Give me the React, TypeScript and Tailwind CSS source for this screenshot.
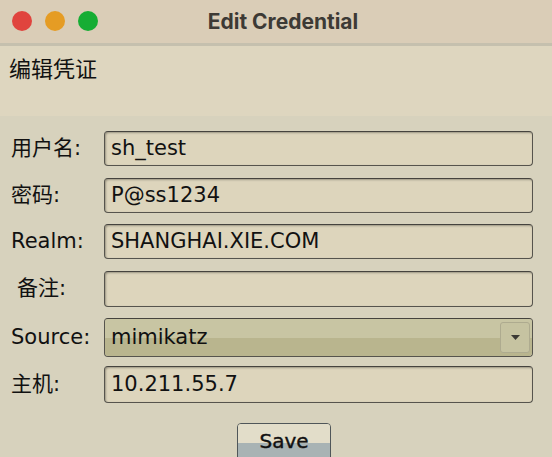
import React from "react";

const font = { fontFamily: '"DejaVu Sans", "Noto Sans CJK SC", sans-serif' };

function Field({ value }: { value: string }) {
  return (
    <div className="flex-1 h-full rounded-[4px] border border-[#56544d] border-t-[#45433e] bg-[#ddd5bc] shadow-[inset_1px_1px_2px_rgba(0,0,0,0.3)] flex items-center pl-[6px] text-[21px] text-[#111] leading-none">
      {value}
    </div>
  );
}

export default function App() {
  return (
    <div
      className="w-[552px] h-[457px] overflow-hidden bg-[#d7d2bd] flex flex-col text-[#111]"
      style={font}
    >
      {/* Title bar */}
      <div className="relative h-[43px] shrink-0 bg-[#dacdb7] flex items-center justify-center">
        <div className="absolute left-[12px] top-[11px] flex gap-[13px]">
          <div className="w-[20px] h-[20px] rounded-full bg-[#e0443e]" />
          <div className="w-[20px] h-[20px] rounded-full bg-[#e59c24]" />
          <div className="w-[20px] h-[20px] rounded-full bg-[#16ad34]" />
        </div>
        <span
          className="ml-[14px] text-[21px] font-bold text-[#3d3a35]"
          style={{ fontFamily: 'Inter, "Liberation Sans", sans-serif' }}
        >
          Edit Credential
        </span>
      </div>
      <div className="h-[3px] shrink-0 bg-[#c5c0ae]" />
      {/* Header */}
      <div className="h-[70px] shrink-0 bg-[#ded6bf] px-[9px] pt-[10px]">
        <div className="text-[22px] leading-[22px]" style={{ fontFamily: '"Noto Sans CJK SC", sans-serif' }}>
          编辑凭证
        </div>
      </div>
      {/* Form */}
      <div className="flex flex-col pt-[15px] pr-[19px]">
        <div className="flex items-center h-[35px]">
          <div className="w-[104px] pl-[11px] text-[21px]">用户名:</div>
          <Field value="sh_test" />
        </div>
        <div className="flex items-center h-[35px] mt-[12px]">
          <div className="w-[104px] pl-[11px] text-[21px]">密码:</div>
          <Field value="P@ss1234" />
        </div>
        <div className="flex items-center h-[35px] mt-[11px]">
          <div className="w-[104px] pl-[11px] text-[21px]">Realm:</div>
          <Field value="SHANGHAI.XIE.COM" />
        </div>
        <div className="flex items-center h-[36px] mt-[12px]">
          <div className="w-[104px] pl-[17px] text-[21px]">备注:</div>
          <Field value="" />
        </div>
        <div className="flex items-center h-[39px] mt-[11px]">
          <div className="w-[104px] pl-[11px] text-[21px]">Source:</div>
          <div className="flex-1 h-full rounded-[4px] border border-[#56544d] border-t-[#45433e] overflow-hidden relative flex flex-col shadow-[inset_1px_1px_2px_rgba(0,0,0,0.3)]">
            <div className="h-1/2 bg-[#c8c5a3]" />
            <div className="h-1/2 bg-[#b9b58e]" />
            <div className="absolute inset-0 flex items-center pl-[6px] text-[21px] leading-none">
              mimikatz
            </div>
            <div className="absolute right-[2px] top-[3px] bottom-[3px] w-[30px] rounded-[3px] border border-[#aeab8f] bg-[#c6c3a1] flex items-center justify-center">
              <svg width="9" height="5" viewBox="0 0 9 5">
                <path d="M0 0 L9 0 L4.5 5 Z" fill="#3b3a35" />
              </svg>
            </div>
          </div>
        </div>
        <div className="flex items-center h-[37px] mt-[9px]">
          <div className="w-[104px] pl-[11px] text-[21px]">主机:</div>
          <Field value="10.211.55.7" />
        </div>
        <div className="flex justify-center mt-[20px] pl-[35px]">
          <div className="w-[94px] h-[40px] rounded-[4px] border border-[#4f5659] overflow-hidden relative flex flex-col">
            <div className="h-[19px] bg-[#e2ddc9]" />
            <div className="flex-1 bg-[#a8b3b4]" />
            <div className="absolute inset-x-0 top-[3px] flex justify-center text-[20px] leading-[28px] [-webkit-text-stroke:0.4px_#111]">
              Save
            </div>
          </div>
        </div>
      </div>
    </div>
  );
}
